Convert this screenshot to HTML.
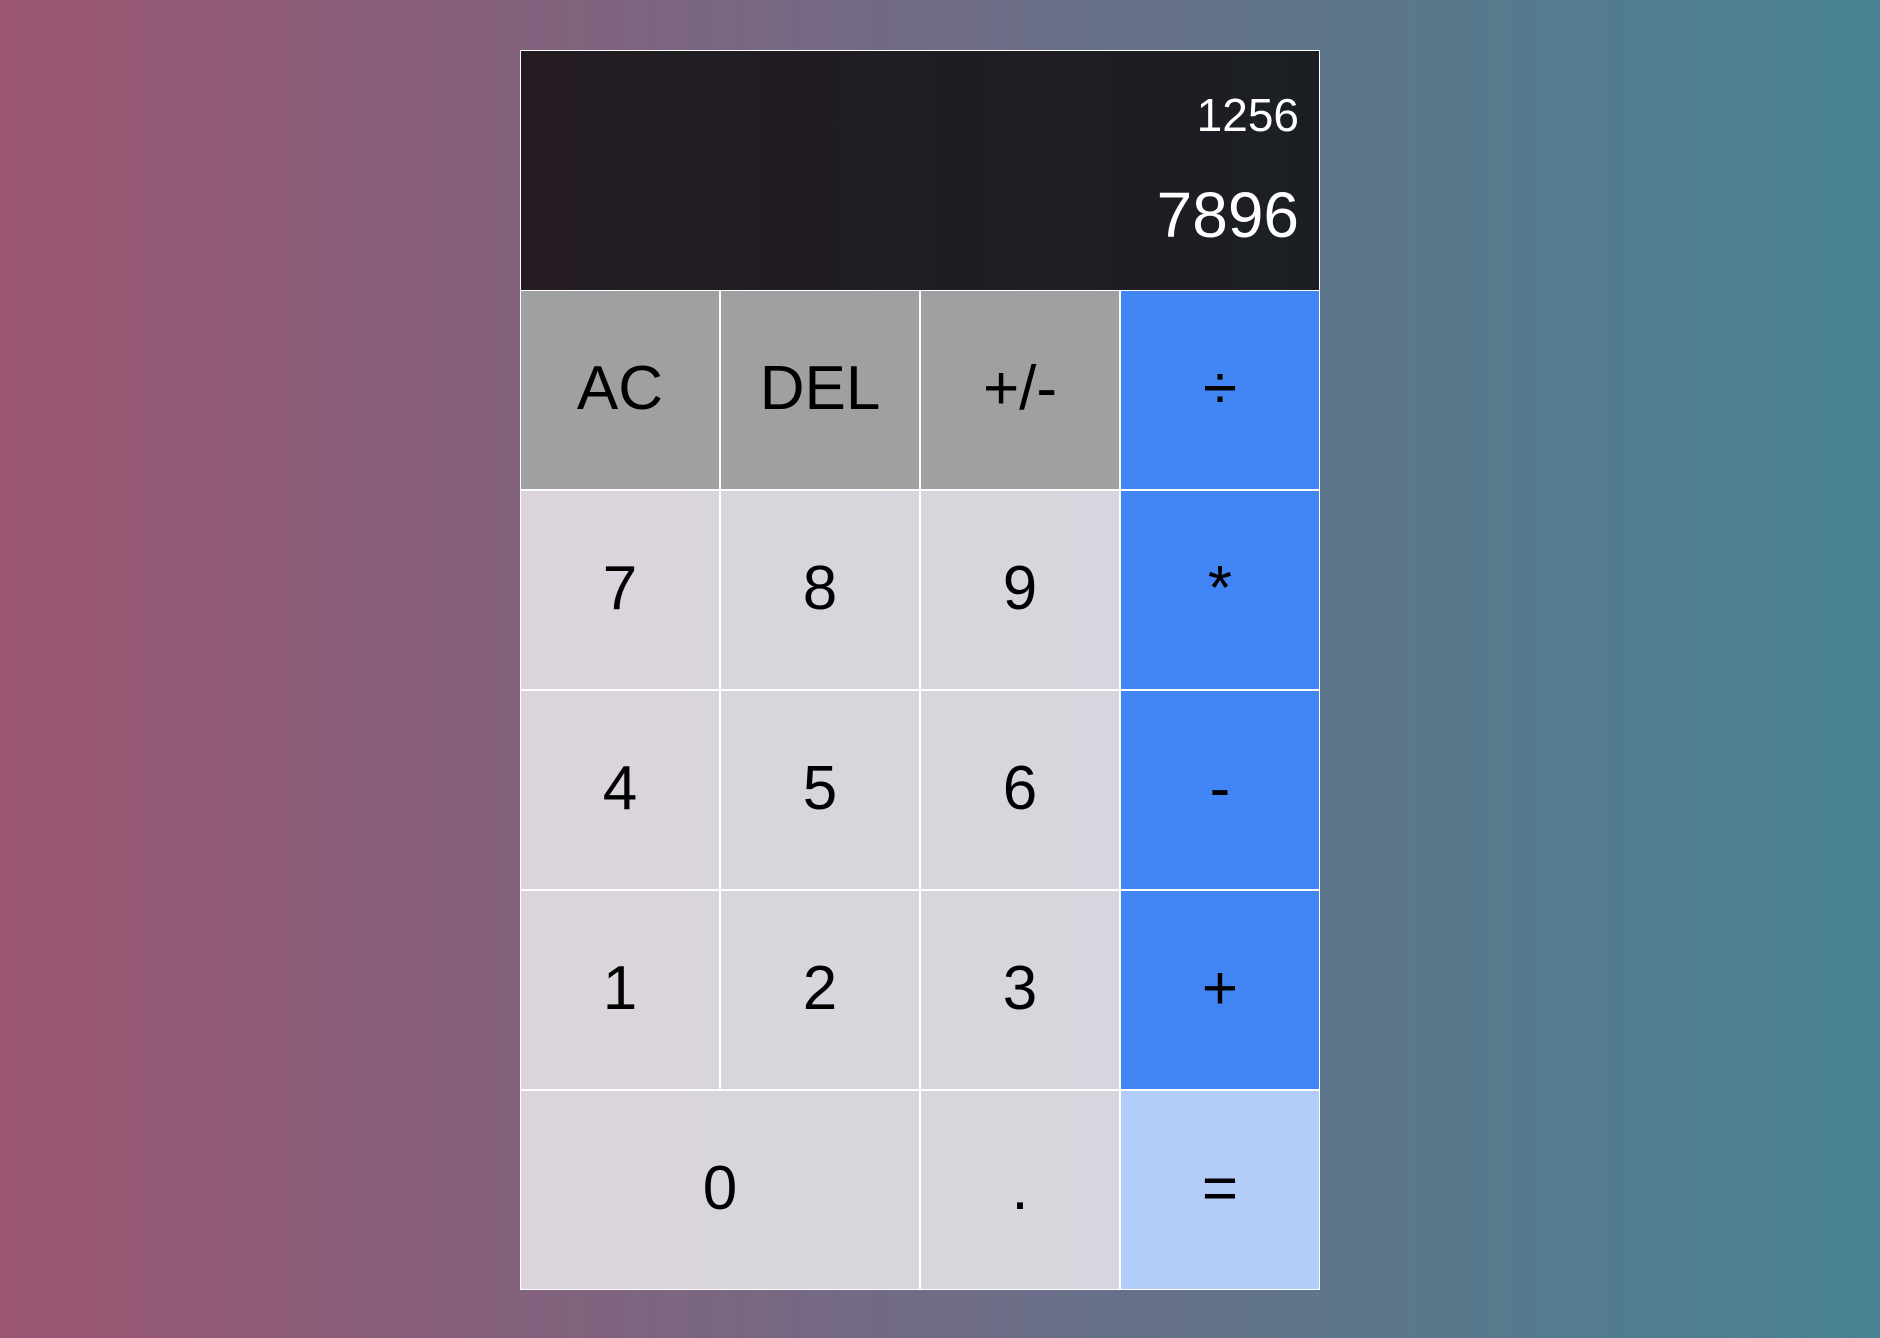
<!DOCTYPE html>
<html><head><meta charset="utf-8"><style>
html,body{margin:0;padding:0;width:1880px;height:1338px;overflow:hidden}
body{background:linear-gradient(to right,#9c5672,#6b6e88 55%,#478391);font-family:"Liberation Sans",Arial,sans-serif}
.calc{position:absolute;left:520px;top:50px;width:800px;height:1240px}
.disp{height:240px;background:linear-gradient(to right,#241b23,#1b1f24);color:#fff;position:relative;box-sizing:border-box;border:1px solid #fff;border-bottom:none}
.prev{position:absolute;right:20px;top:64px;font-size:46px;line-height:0}
.cur{position:absolute;right:20px;top:164px;font-size:64px;line-height:0}
.grid{display:grid;grid-template-columns:repeat(4,200px);grid-auto-rows:200px;background:linear-gradient(to right,#dbd4dc,#d3d7de)}
.b{box-sizing:border-box;border:1.5px solid #fff;display:flex;align-items:center;justify-content:center;font-size:62px;color:#000;padding-bottom:4px}
.g{background:#a0a0a2}
.o{background:#4285f4}
.e{background:#b3cdfb}
.s2{grid-column:span 2}
</style></head><body>
<div class="calc">
<div class="disp"><div class="prev">1256</div><div class="cur">7896</div></div>
<div class="grid">
<div class="b g">AC</div><div class="b g">DEL</div><div class="b g">+/-</div><div class="b o">÷</div>
<div class="b">7</div><div class="b">8</div><div class="b">9</div><div class="b o">*</div>
<div class="b">4</div><div class="b">5</div><div class="b">6</div><div class="b o">-</div>
<div class="b">1</div><div class="b">2</div><div class="b">3</div><div class="b o">+</div>
<div class="b s2">0</div><div class="b">.</div><div class="b e">=</div>
</div>
</div>
</body></html>
